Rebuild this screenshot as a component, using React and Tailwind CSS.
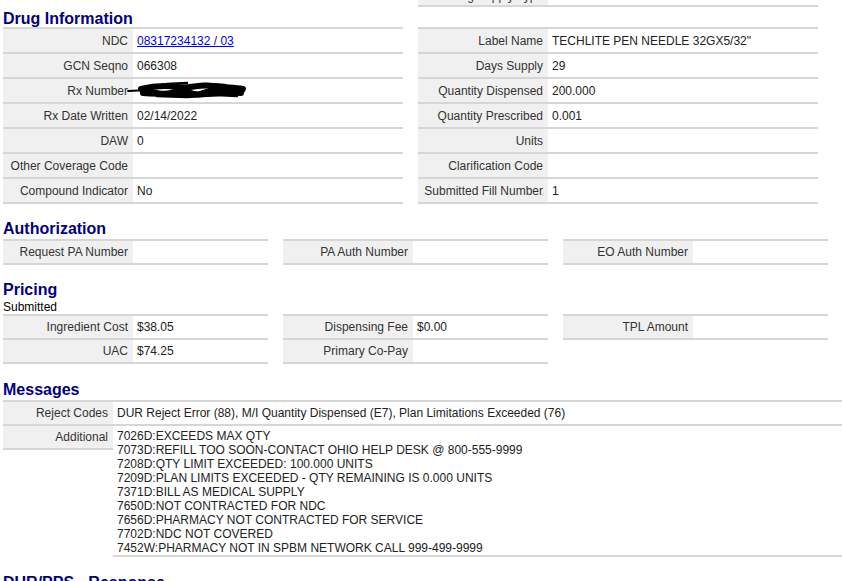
import React from 'react';

const border = 'border-[#d6d6d6]';

function Heading({ children, className = '' }) {
  return (
    <h2 className={`h-[20px] text-[16px] font-bold leading-[20px] text-[#000080] ${className}`}>
      {children}
    </h2>
  );
}

// one label/value line of a grey-label table
function Row({ label, children, h = 'h-[24px]', lw = 'w-[130px]' }) {
  return (
    <div className={`relative flex ${h} border-b-2 ${border}`}>
      <div className={`${lw} flex shrink-0 items-center justify-end bg-[#f0f0f0] pr-[5px] text-[#333]`}>
        {label}
      </div>
      <div className="flex min-w-0 flex-1 items-center whitespace-nowrap pl-[4px] text-[#222]">
        {children}
      </div>
    </div>
  );
}

function Table({ children }) {
  return <div className={`border-t-2 ${border}`}>{children}</div>;
}

function Redacted() {
  return (
    <svg
      className="absolute left-[124px] top-[2px]"
      width="120"
      height="20"
      viewBox="0 0 120 20"
      fill="none"
      stroke="#000"
      strokeLinecap="round"
      strokeLinejoin="round"
    >
      <path d="M1 10 L22 9" strokeWidth="1.8" />
      <path d="M14 8 C26 5 38 4 50 6 S72 3 86 5 S106 6 116 8" strokeWidth="6" />
      <path d="M16 12 C34 14 50 11 64 13 S92 10 114 12" strokeWidth="6" />
      <path d="M20 9 L38 13 L54 8 L70 13 L86 8 L102 13 L116 10" strokeWidth="4" />
      <path d="M30 15 L60 16 L90 14 L110 15" strokeWidth="2.5" />
      <path d="M40 3 L60 2 M76 3 L98 4" strokeWidth="2.5" />
    </svg>
  );
}

const drugLeft = [
  ['NDC', <a href="#" className="text-[#0000ee] underline">08317234132 / 03</a>],
  ['GCN Seqno', '066308'],
  ['Rx Number', ''],
  ['Rx Date Written', '02/14/2022'],
  ['DAW', '0'],
  ['Other Coverage Code', ''],
  ['Compound Indicator', 'No'],
];

const drugRight = [
  ['Label Name', 'TECHLITE PEN NEEDLE 32GX5/32"'],
  ['Days Supply', '29'],
  ['Quantity Dispensed', '200.000'],
  ['Quantity Prescribed', '0.001'],
  ['Units', ''],
  ['Clarification Code', ''],
  ['Submitted Fill Number', '1'],
];

const additional = [
  '7026D:EXCEEDS MAX QTY',
  '7073D:REFILL TOO SOON-CONTACT OHIO HELP DESK @ 800-555-9999',
  '7208D:QTY LIMIT EXCEEDED: 100.000 UNITS',
  '7209D:PLAN LIMITS EXCEEDED - QTY REMAINING IS 0.000 UNITS',
  '7371D:BILL AS MEDICAL SUPPLY',
  '7650D:NOT CONTRACTED FOR NDC',
  '7656D:PHARMACY NOT CONTRACTED FOR SERVICE',
  '7702D:NDC NOT COVERED',
  '7452W:PHARMACY NOT IN SPBM NETWORK CALL 999-499-9999',
];

export default function App() {
  return (
    <div className="h-[581px] overflow-hidden bg-white pl-[3px] font-['Liberation_Sans',Arial,sans-serif] text-[12px] leading-[14px]">
      {/* tail of the previous table, cut at the top */}
      <div className="grid h-[7px] grid-cols-[400px_400px] gap-x-[15px]">
        <div />
        <div className={`flex h-[7px] border-b-2 ${border}`}>
          <div className="w-[130px] overflow-hidden bg-[#f0f0f0] pr-[5px] text-right text-[#333]">
            <div className="-mt-[11px]">Drug Supply Type</div>
          </div>
        </div>
      </div>

      {/* Drug Information */}
      <h2 className="h-[20px] text-[16px] font-bold leading-[23px] text-[#000080]">Drug Information</h2>
      <div className="grid grid-cols-[400px_400px] gap-x-[15px]">
        <Table>
          {drugLeft.map(([label, value]) => (
            <Row key={label} label={label} h="h-[25px]">
              {value}
              {label === 'Rx Number' && <Redacted />}
            </Row>
          ))}
        </Table>
        <Table>
          {drugRight.map(([label, value]) => (
            <Row key={label} label={label} h="h-[25px]">
              {value}
            </Row>
          ))}
        </Table>
      </div>

      {/* Authorization */}
      <Heading className="mt-[15px]">Authorization</Heading>
      <div className="grid grid-cols-[265px_265px_265px] gap-x-[15px]">
        <Table><Row label="Request PA Number" /></Table>
        <Table><Row label="PA Auth Number" /></Table>
        <Table><Row label="EO Auth Number" /></Table>
      </div>

      {/* Pricing */}
      <Heading className="mt-[15px]">Pricing</Heading>
      <div className="h-[14px] text-black">Submitted</div>
      <div className="grid grid-cols-[265px_265px_265px] items-start gap-x-[15px]">
        <Table>
          <Row label="Ingredient Cost">$38.05</Row>
          <Row label="UAC">$74.25</Row>
        </Table>
        <Table>
          <Row label="Dispensing Fee">$0.00</Row>
          <Row label="Primary Co-Pay" />
        </Table>
        <Table>
          <Row label="TPL Amount" />
        </Table>
      </div>

      {/* Messages */}
      <Heading className="mt-[16px]">Messages</Heading>
      <Table>
        <Row label="Reject Codes" lw="w-[110px]">
          DUR Reject Error (88), M/I Quantity Dispensed (E7), Plan Limitations Exceeded (76)
        </Row>
        <div className="flex items-start">
          <div className={`flex h-[24px] w-[110px] shrink-0 items-center justify-end border-b-2 ${border} bg-[#f0f0f0] pr-[5px] text-[#333]`}>
            Additional
          </div>
          <div className={`flex-1 border-b-2 ${border} pl-[4px] pt-[3px] text-[#222]`}>
            {additional.map((line) => (
              <div key={line} className="h-[14px] whitespace-nowrap">{line}</div>
            ))}
          </div>
        </div>
      </Table>

      <Heading className="mt-[16px]">DUR/PPS - Response</Heading>
    </div>
  );
}
